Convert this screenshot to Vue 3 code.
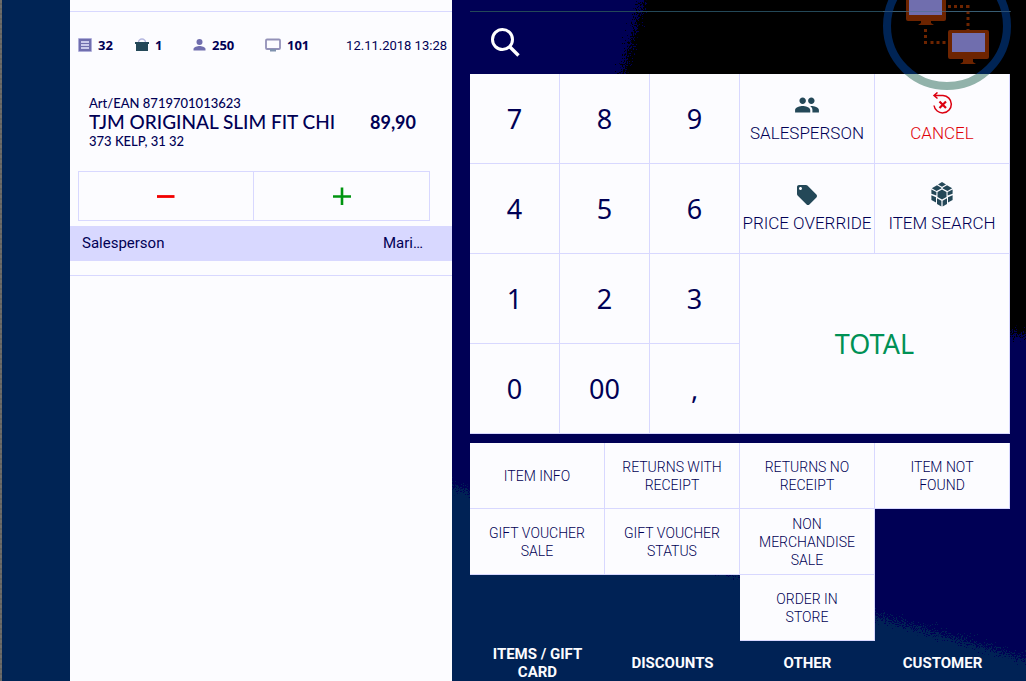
<script setup>
const stats = [
  { icon: 'receipt', value: '32', label: 'Receipt' },
  { icon: 'bag', value: '1', label: 'Items' },
  { icon: 'person', value: '250', label: 'Cashier' },
  { icon: 'monitor', value: '101', label: 'Register' },
]
const keys = [
  { text: '7' }, { text: '8' }, { text: '9' },
  { text: 'SALESPERSON', icon: 'people' },
  { text: 'CANCEL', icon: 'cancel' },
  { text: '4' }, { text: '5' }, { text: '6' },
  { text: 'PRICE OVERRIDE', icon: 'tag' },
  { text: 'ITEM SEARCH', icon: 'cube' },
  { text: '1' }, { text: '2' }, { text: '3' },
  { text: 'TOTAL', total: true },
  { text: '0' }, { text: '00' }, { text: ',' },
]
const actions = [
  'ITEM INFO', 'RETURNS WITH RECEIPT', 'RETURNS NO RECEIPT', 'ITEM NOT FOUND',
  'GIFT VOUCHER SALE', 'GIFT VOUCHER STATUS', 'NON MERCHANDISE SALE', 'ORDER IN STORE',
]
const tabs = ['ITEMS / GIFT CARD', 'DISCOUNTS', 'OTHER', 'CUSTOMER']
</script>

<template>
  <div class="page">
    <svg class="backdrop" viewBox="0 0 1026 681" preserveAspectRatio="none" aria-hidden="true">
      <defs>
        <filter id="grain" x="-5%" y="-5%" width="110%" height="110%">
          <feTurbulence type="fractalNoise" baseFrequency="0.9" numOctaves="2" seed="4" />
          <feDisplacementMap in="SourceGraphic" scale="32" xChannelSelector="R" yChannelSelector="G" />
        </filter>
      </defs>
      <rect width="1026" height="681" fill="#000055" />
      <g filter="url(#grain)">
        <path d="M646 -30L643 0C632 40 620 70 618 110C618 300 900 330 1060 336V-30Z" fill="#000" />
        <path d="M-30 440H300C420 475 560 520 738 575C840 608 940 632 1060 670V720H-30Z" fill="#002455" />
      </g>
    </svg>

    <div class="edge"></div>
    <aside class="rail"></aside>

    <section class="ticket">
      <header class="ticket-top">
        <ul class="stats">
          <li v-for="s in stats" :key="s.icon" :title="s.label">
            <svg v-if="s.icon === 'receipt'" width="14" height="14" viewBox="0 0 14 14">
              <rect x=".5" y=".5" width="13" height="13" fill="#706eae" stroke="#a9a7dd" stroke-dasharray="1 1" />
              <path d="M3 4h8M3 7h8M3 10h8" stroke="#e8e8ff" stroke-width="1.4" />
            </svg>
            <svg v-else-if="s.icon === 'bag'" width="14" height="14" viewBox="0 0 14 14">
              <path d="M3.500 4.500a3.500 3.500 0 0 1 7 0" fill="none" stroke="#b4b6df" stroke-width="1.4" />
              <path d="M0 4h14v2h-1v7H1V6H0z" fill="#244858" />
            </svg>
            <svg v-else-if="s.icon === 'person'" width="13" height="14" viewBox="0 0 13 14">
              <circle cx="6.500" cy="4" r="3" fill="#706eae" />
              <path d="M.5 12.500V11c0-2 4-3 6-3s6 1 6 3v1.500z" fill="#706eae" />
            </svg>
            <svg v-else width="16" height="14" viewBox="0 0 16 14">
              <rect x="1" y="1.500" width="14" height="9.500" rx="1" fill="none" stroke="#9391b8" stroke-width="1.800" />
              <path d="M5 11h6v2.500H5z" fill="#7f92ae" />
            </svg>
            <b>{{ s.value }}</b>
          </li>
        </ul>
        <time class="date">12.11.2018 13:28</time>
      </header>

      <article class="item">
        <p class="meta">Art/EAN 8719701013623</p>
        <div class="item-line">
          <h2>TJM ORIGINAL SLIM FIT CHI</h2>
          <span class="price">89,90</span>
        </div>
        <p class="meta">373 KELP, 31 32</p>
      </article>

      <div class="stepper">
        <button type="button" aria-label="Decrease quantity">
          <svg width="18" height="18" viewBox="0 0 18 18"><path d="M0 9.500h17.500" stroke="#f20000" stroke-width="2.800" /></svg>
        </button>
        <button type="button" aria-label="Increase quantity">
          <svg width="18" height="18" viewBox="0 0 18 18"><path d="M0 9.500h18M9 .5v18" stroke="#009410" stroke-width="2.600" /></svg>
        </button>
      </div>

      <div class="seller">
        <span>Salesperson</span>
        <span>Mari…</span>
      </div>
      <hr class="rule" />
    </section>

    <main class="register">
      <div class="search-bar">
        <button type="button" class="search" aria-label="Search">
          <svg width="30" height="30" viewBox="0 0 30 30" fill="none" stroke="#fff">
            <circle cx="12.500" cy="11.500" r="10" stroke-width="3" />
            <path d="M19.500 18.500l9 9" stroke-width="3.400" />
          </svg>
        </button>
      </div>

      <div class="keypad">
        <button
          v-for="k in keys"
          :key="k.text"
          type="button"
          :class="['key', { fn: k.icon, cancel: k.icon === 'cancel', total: k.total }]"
        >
          <svg v-if="k.icon === 'people'" width="26" height="26" viewBox="0 0 24 24" fill="#244858">
            <path d="M16 11c1.660 0 2.990-1.340 2.990-3S17.660 5 16 5s-3 1.340-3 3 1.340 3 3 3zm-8 0c1.660 0 2.990-1.340 2.990-3S9.660 5 8 5 5 6.340 5 8s1.340 3 3 3zm0 2c-2.330 0-7 1.170-7 3.500V19h14v-2.500c0-2.330-4.670-3.500-7-3.500zm8 0c-.29 0-.62.020-.97.050 1.160.84 1.970 1.970 1.970 3.450V19h6v-2.500c0-2.330-4.670-3.500-7-3.500z" />
          </svg>
          <svg v-else-if="k.icon === 'cancel'" width="26" height="26" viewBox="0 0 26 26" fill="none" stroke="#dc0010" stroke-width="1.500">
            <path d="M8.500 .5L5 3.500L8.500 6.500M5 3.500H14A8.700 8.700 0 1 1 5 13.500" />
            <path d="M10.500 9.500l6.500 6.500m0-6.500l-6.500 6.500" stroke-width="2.200" />
          </svg>
          <svg v-else-if="k.icon === 'tag'" width="24" height="26" viewBox="0 0 24 24" fill="#244858">
            <path d="M21.410 11.580l-9-9C12.050 2.220 11.550 2 11 2H4c-1.100 0-2 .9-2 2v7c0 .55.22 1.050.59 1.420l9 9c.36.36.86.58 1.410.58s1.050-.22 1.410-.59l7-7c.37-.36.59-.86.59-1.410s-.23-1.060-.59-1.420zM5.500 7C4.670 7 4 6.330 4 5.500S4.670 4 5.500 4 7 4.670 7 5.500 6.330 7 5.500 7z" />
          </svg>
          <svg v-else-if="k.icon === 'cube'" width="26" height="26" viewBox="0 0 26 26" fill="#244858">
            <path d="M13 7.500l4.500 2.500v5L13 17.500l-4.500-2.500v-5z" />
            <path d="M13 0l4 2.400L13 4.800L9 2.400z" />
            <path d="M8 3.200l4.300 2.500v.8L7.500 9L2.800 6.300z" />
            <path d="M18 3.200l-4.300 2.500v.8L18.500 9l4.700-2.700z" />
            <path d="M2.400 7.500l5 2.600v3.400l-5-1.700z" />
            <path d="M23.600 7.500l-5 2.600v3.400l5-1.700z" />
            <path d="M2.400 13.300l4.600 1.900v5.200l-4.600-2.500z" />
            <path d="M23.600 13.300l-4.600 1.900v5.200l4.600-2.500z" />
            <path d="M8 16.300l4.400 2.500v5.800L8 22z" />
            <path d="M18 16.300l-4.400 2.500v5.800L18 22z" />
          </svg>
          <span>{{ k.text }}</span>
        </button>
      </div>

      <div class="actions">
        <button v-for="a in actions" :key="a" type="button"><span>{{ a }}</span></button>
      </div>

      <nav class="tabs">
        <button v-for="t in tabs" :key="t" type="button"><span>{{ t }}</span></button>
      </nav>
    </main>

    <svg class="badge" width="128" height="90" viewBox="0 0 128 90" aria-hidden="true">
      <defs>
        <clipPath id="upper"><rect width="128" height="74" /></clipPath>
        <clipPath id="lower"><rect y="74" width="128" height="16" /></clipPath>
      </defs>
      <circle cx="64" cy="26" r="60" fill="none" stroke="#002455" stroke-width="8" clip-path="url(#upper)" />
      <circle cx="64" cy="26" r="60" fill="none" stroke="#91b2aa" stroke-width="8" clip-path="url(#lower)" />
      <path d="M65 6.500h19M85 5v25M42.500 29v15M47.500 42.500h18" fill="none" stroke="#6d2400" stroke-width="3" stroke-dasharray="3 3" />
      <path d="M23 0h40v19q0 2-2 2h-13v2l3 2H35l3-2v-2H25q-2 0-2-2z" fill="#6d2400" />
      <path d="M26 0h33v15H26z" fill="#706eae" />
      <path d="M67 30h37q2 0 2 2v25q0 2-2 2H90v3l3 2H77l3-2v-3H67q-2 0-2-2V32q0-2 2-2z" fill="#6d2400" />
      <path d="M69 33h33v19H69z" fill="#706eae" />
      <path d="M0 11.500h128" stroke="#48708a" stroke-opacity=".55" />
    </svg>
  </div>
</template>

<style>
body {
  margin: 0;
  background: #000055;
}
</style>

<style scoped>
.page {
  position: relative;
  display: grid;
  grid-template-columns: 2px 68px minmax(0, 382fr) minmax(0, 558fr);
  min-height: 100vh;
  padding-right: 16px;
  box-sizing: border-box;
  overflow: hidden;
  color: #000055;
  font-family: Roboto, "Liberation Sans", sans-serif;
}
.backdrop {
  position: absolute;
  inset: 0;
  width: 100%;
  height: 100%;
}
.edge,
.rail,
.ticket,
.register {
  position: relative;
}
.edge {
  background: repeating-linear-gradient(#6c6c6a 0 3px, #62625f 3px 5px);
}
.rail {
  background: #002455;
}
button {
  margin: 0;
  padding: 0;
  border: 0;
  background: none;
  color: inherit;
  font: inherit;
  cursor: pointer;
}
svg {
  display: block;
  flex: none;
}

.ticket {
  background: #fcfcff;
  padding-top: 11px;
}
.ticket-top {
  display: flex;
  align-items: center;
  height: 66px;
  border-top: 1px solid #d8d8ff;
  padding: 0 5px 0 8px;
}
.stats {
  flex: 1;
  display: grid;
  grid-template-columns: 57px 58px 72px auto;
  margin: 0;
  padding: 0;
  list-style: none;
}
.stats li {
  display: flex;
  align-items: center;
  gap: 6px;
}
.stats b {
  font: 700 13px/18px "Open Sans", "Noto Sans", sans-serif;
}
.date {
  font-size: 13px;
  white-space: nowrap;
}
.item {
  padding: 16px 20px 0 19px;
  font-family: Lato, "Open Sans", sans-serif;
}
.meta {
  margin: 0;
  font-size: 13px;
  font-weight: 500;
  line-height: 18px;
}
.item-line {
  display: flex;
  justify-content: space-between;
  gap: 35px;
  padding-right: 16px;
  font-size: 18px;
  line-height: 20px;
}
.item-line h2 {
  flex: 1;
  min-width: 0;
  margin: 0;
  overflow: hidden;
  white-space: nowrap;
  font: inherit;
  font-size: 19px;
  font-weight: 500;
}
.price {
  font-weight: 700;
}
.stepper {
  display: grid;
  grid-template-columns: 1fr 1fr;
  height: 48px;
  margin: 21px 22px 5px 8px;
  border: 1px solid #d8d8ff;
}
.stepper button {
  display: grid;
  place-items: center;
}
.stepper button:first-child {
  border-right: 1px solid #d8d8ff;
}
.seller {
  display: flex;
  justify-content: space-between;
  padding: 0 29px 0 12px;
  background: #d8d8ff;
  font-size: 15px;
  line-height: 35px;
}
.rule {
  height: 1px;
  margin: 14px 0 0;
  border: 0;
  background: #d8d8ff;
}

.register {
  padding: 11px 0 0 18px;
}
.search-bar {
  display: flex;
  align-items: center;
  height: 62px;
  border-top: 1px solid #244858;
  padding-left: 20px;
}
.keypad {
  display: grid;
  grid-template-columns: 2fr 2fr 2fr 3fr 3fr;
  grid-auto-rows: 90px;
  margin-bottom: 9px;
}
.key {
  display: flex;
  flex-direction: column;
  align-items: center;
  justify-content: center;
  border: solid #d8d8ff;
  border-width: 0 1px 1px 0;
  background: #fcfcff;
  font: 400 27px/30px "Noto Sans", "Open Sans", sans-serif;
}
.key.fn {
  gap: 6px;
  padding-bottom: 4px;
  font: 300 17px/18px Roboto, "Liberation Sans", sans-serif;
  white-space: nowrap;
}
.key.cancel {
  color: #e00008;
}
.key.total {
  grid-area: 3 / 4 / 5 / 6;
  color: #009155;
}
.actions {
  display: grid;
  grid-template-columns: repeat(4, 1fr);
  grid-auto-rows: 66px;
}
.actions button {
  padding: 0 16px;
  border: solid #d8d8ff;
  border-width: 0 1px 1px 0;
  background: #fcfcff;
  font-size: 14px;
  font-weight: 300;
  line-height: 18px;
}
.actions button:last-child {
  grid-area: 3 / 3;
}
.tabs {
  display: grid;
  grid-template-columns: repeat(4, 1fr);
  padding-top: 4px;
  color: #fcfcff;
}
.tabs button {
  padding: 0 16px;
  font-size: 15px;
  font-weight: 700;
  line-height: 18px;
}
.badge {
  position: absolute;
  top: 0;
  right: 15px;
  pointer-events: none;
}
</style>
